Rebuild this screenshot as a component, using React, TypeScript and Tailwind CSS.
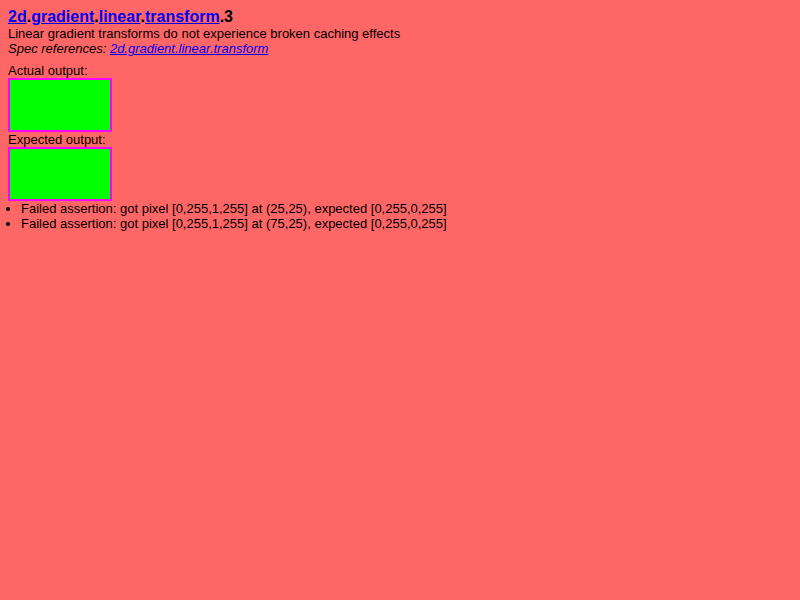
export default function App() {
  const font = { fontFamily: '"Liberation Sans", Arial, sans-serif' };
  return (
    <div className="min-h-[600px] bg-[#ff6666] p-2 text-[13px] leading-[15px] text-black" style={font}>
      <h1 className="text-[16px] font-bold leading-[18px]">
        <a href="#" className="text-[#0000ee] underline">2d</a>.
        <a href="#" className="text-[#0000ee] underline">gradient</a>.
        <a href="#" className="text-[#0000ee] underline">linear</a>.
        <a href="#" className="text-[#0000ee] underline">transform</a>.3
      </h1>
      <p>Linear gradient transforms do not experience broken caching effects</p>
      <p className="italic">
        Spec references:{' '}
        <a href="#" className="text-[#0000ee] underline">2d.gradient.linear.transform</a>
      </p>
      <p className="mt-[7px]">Actual output:</p>
      <div className="h-[54px] w-[104px] border-2 border-[#ff00ff] bg-[#00ff00]" />
      <p>Expected output:</p>
      <div className="h-[54px] w-[104px] border-2 border-[#ff00ff] bg-[#00ff00]" />
      <ul className="list-disc pl-[13px]">
        <li>Failed assertion: got pixel [0,255,1,255] at (25,25), expected [0,255,0,255]</li>
        <li>Failed assertion: got pixel [0,255,1,255] at (75,25), expected [0,255,0,255]</li>
      </ul>
    </div>
  );
}
